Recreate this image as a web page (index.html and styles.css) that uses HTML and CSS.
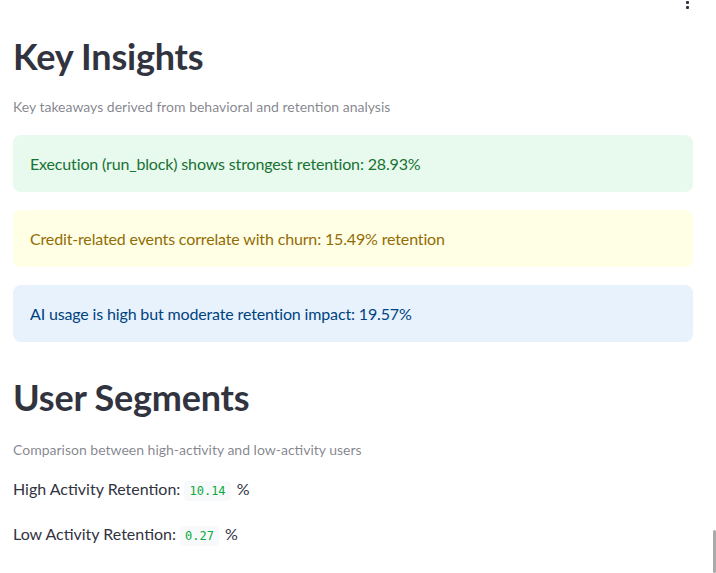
FILE: index.html
```html
<!DOCTYPE html>
<html>
<head>
<meta charset="utf-8">
<link rel="stylesheet" href="styles.css">
</head>
<body>
<div class="menu"><span></span><span></span></div>
<main class="main">
  <h2 class="heading">Key Insights</h2>
  <p class="caption">Key takeaways derived from behavioral and retention analysis</p>
  <div class="alerts">
    <div class="alert success">Execution (run_block) shows strongest retention: 28.93%</div>
    <div class="alert warning">Credit-related events correlate with churn: 15.49% retention</div>
    <div class="alert info">AI usage is high but moderate retention impact: 19.57%</div>
  </div>
  <h2 class="heading seg">User Segments</h2>
  <p class="caption seg-caption">Comparison between high-activity and low-activity users</p>
  <p class="metric first">High Activity Retention: <code>10.14</code> %</p>
  <p class="metric">Low Activity Retention: <code>0.27</code> %</p>
</main>
<div class="scrollbar"></div>
</body>
</html>
```
FILE: styles.css
```css
html, body {
  margin: 0;
  padding: 0;
  background: #ffffff;
  overflow: hidden;
}
body {
  font-family: "Lato", "Noto Sans", sans-serif;
  color: rgb(49, 51, 63);
  width: 716px;
  height: 573px;
  position: relative;
}
.main {
  padding: 35px 23px 0 13px;
}
.heading {
  margin: 0;
  font-size: 36px;
  font-weight: 700;
  line-height: 1.2;
  color: rgb(49, 51, 63);
  letter-spacing: -0.2px;
}
.caption {
  margin: 19px 0 0 0;
  font-size: 14px;
  line-height: 20px;
  color: rgba(49, 51, 63, 0.6);
}
.alerts {
  display: flex;
  flex-direction: column;
  gap: 18px;
  margin-top: 18px;
}
.alert {
  height: 57px;
  box-sizing: border-box;
  padding: 0 17px;
  display: flex;
  align-items: center;
  border-radius: 8px;
  font-size: 16px;
  letter-spacing: -0.15px;
}
.success { background: rgb(232, 249, 238); color: rgb(23, 114, 51); }
.warning { background: rgb(255, 255, 230); color: rgb(146, 108, 5); }
.info { background: rgb(231, 242, 253); color: rgb(0, 66, 128); }
.seg { margin-top: 34px; }
.seg-caption { margin-top: 21px; }
.metric {
  margin: 0;
  font-size: 16px;
  line-height: 24px;
  margin-top: 19px;
}
.metric.first { margin-top: 17px; }
code {
  font-family: "DejaVu Sans Mono", "Liberation Mono", monospace;
  font-size: 12px;
  color: rgb(9, 171, 59);
  background: rgb(248, 249, 251);
  padding: 3px 5px;
  margin-right: 2px;
  border-radius: 4px;
}
.menu {
  position: absolute;
  left: 686px;
  top: 1px;
  display: flex;
  flex-direction: column;
  gap: 2px;
}
.menu span {
  width: 3px;
  height: 3px;
  background: rgb(49, 51, 63);
  border-radius: 1px;
}
.scrollbar {
  position: absolute;
  left: 713px;
  top: 530px;
  width: 3px;
  height: 43px;
  background: rgb(170, 170, 170);
  border-radius: 2px;
}
```
